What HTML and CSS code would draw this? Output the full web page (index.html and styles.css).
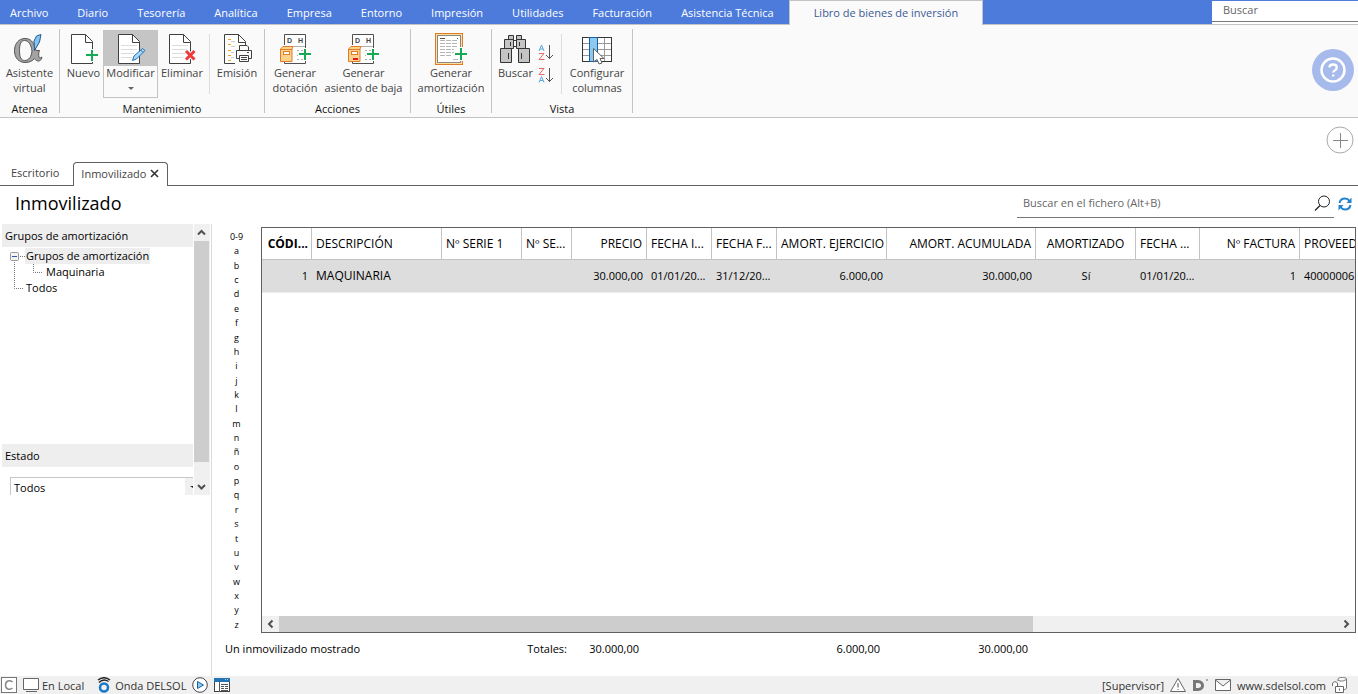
FILE: index.html
```html
<!DOCTYPE html>
<html lang="es">
<head>
<meta charset="utf-8">
<title>Inmovilizado</title>
<link rel="stylesheet" href="styles.css">
</head>
<body>
<svg class="defs" width="0" height="0" aria-hidden="true">
  <defs>
    <g id="sheet"><path d="M6.500 2.500H20.500L27.500 9.500V31.500H6.500Z" fill="#fff" stroke="#404040"/><path d="M20.500 2.500V10.500H27.500" fill="none" stroke="#404040"/></g>
    <g id="lines" stroke="#dcdcdc"><path d="M9 13.500H25M9 17.500H25M9 21.500H22M9 25.500H20"/></g>
    <g id="ledger">
      <path d="M8.500 13V2.500H29.500V31.500H8.500V28" fill="#fff" stroke="#505050"/>
      <path d="M9 14.500H29M21 18.500H23M25 18.500H27M21 23.500H23M21 27.500H23M25 27.500H27" stroke="#b0b0b0"/>
      <text x="11" y="11" font-size="7" class="glyph">D</text><text x="22" y="11" font-size="7" class="glyph">H</text>
      <path d="M4.500 17L7 14.500H17L16 17V29.500H4.500Z" fill="#fbd38b" stroke="#e07b28"/><path d="M4.500 17.500H16" stroke="#e07b28"/>
      <rect x="7.500" y="19.500" width="6" height="3" fill="#fff" stroke="#e07b28"/>
      <path d="M22 22H35M29 16V29" stroke="#fff" stroke-width="4"/>
      <path d="M23 22H35M29 17V28" stroke="#18a957" stroke-width="2"/>
    </g>
  </defs>
</svg>
<div class="app">
  <header class="menubar">
    <nav class="menu">
      <button>Archivo</button><button>Diario</button><button>Tesorería</button><button>Analítica</button><button>Empresa</button><button>Entorno</button><button>Impresión</button><button>Utilidades</button><button>Facturación</button><button>Asistencia Técnica</button>
    </nav>
    <button class="menu-active">Libro de bienes de inversión</button>
    <input class="top-search" type="search" placeholder="Buscar" aria-label="Buscar">
  </header>

  <section class="ribbon">
    <div class="group g-atenea">
      <div class="tools">
        <button class="tool w-atenea"><svg width="31" height="32" viewBox="0 0 31 32"><path fill-rule="evenodd" d="M11 5.500C16.500 5.500 19.500 9 21 14.500L22 17.500H25.500C24.500 20 24.500 22 25 24C25.500 26 26.500 25.500 27 24L28 24.500C27 28.500 23 29.500 20.500 25.500C18.500 28 15.500 29.500 11 29.500C4.500 29.500 .5 24.500 .5 17.500C.5 10.500 5 5.500 11 5.500ZM10.500 7.500C7 7.500 5.500 11 5.500 17.500C5.500 24 7 27.500 10.500 27.500C15 27.500 17.500 23.500 18 18C17 11 14.500 7.500 10.500 7.500Z" fill="#a3a3a3" stroke="#555"/><path d="M20.500 17.500L20 8L22.500 3L27 1.500L25.500 9Z" fill="#85c4ee" stroke="#235d91"/></svg><span>Asistente<br>virtual</span></button>
      </div>
      <h2>Atenea</h2>
    </div>
    <div class="group g-mant">
      <div class="tools">
        <button class="tool w-nuevo"><svg width="31" height="32" viewBox="3 1 31 32"><use href="#sheet"/><path d="M20 23H34M27 17V30" stroke="#fafafa" stroke-width="4"/><path d="M21 23H33M27 18V29" stroke="#18a957" stroke-width="2"/></svg><span>Nuevo</span></button>
        <button class="tool w-modificar selected"><svg width="31" height="32" viewBox="3 1 31 32"><use href="#sheet"/><use href="#lines"/><path d="M20.500 28.500L22 24L30.500 16.500L33 18.500L24.500 27Z" fill="#a8d8fa" stroke="#2374b5"/><path d="M28.500 18L31 20.500" stroke="#2374b5"/></svg><span>Modificar</span><i class="caret"></i></button>
        <button class="tool w-eliminar"><svg width="32" height="32" viewBox="3 1 32 32"><use href="#sheet"/><use href="#lines"/><path d="M22.500 18.500L32 28M32 18.500L22.500 28" stroke="#fafafa" stroke-width="5"/><path d="M23 19L31.500 27.500M31.500 19L23 27.500" stroke="#ee3a3a" stroke-width="3"/></svg><span>Eliminar</span></button>
        <span class="divider"></span>
        <button class="tool w-eliminar"><svg width="32" height="32" viewBox="3 1 32 32"><use href="#sheet"/><path d="M10 7.500H13M10 12.500H13M10 18.500H13M10 23.500H13M10 28.500H13" stroke="#f2a11f"/><path d="M13 9.500H17M13 14.500H19M13 20.500H16M13 25.500H16" stroke="#ccc"/><g transform="translate(-2 0)"><path d="M19 13H37V32H19Z" fill="#fafafa"/><path d="M23.500 18V13.500H31L32.500 15V18M23.500 26.500H20.500V18.500H35.500V26.500H32.500M23.500 23.500H32.500V29.500H23.500ZM25 25.500H31M25 27.500H31M31 20.500H33" fill="none" stroke="#404040"/></g></svg><span>Emisión</span></button>
      </div>
      <h2>Mantenimiento</h2>
    </div>
    <div class="group g-acc">
      <div class="tools">
        <button class="tool w-dot"><svg width="32" height="32" viewBox="3 1 32 32"><use href="#ledger"/></svg><span>Generar<br>dotación</span></button>
        <button class="tool w-baja"><svg width="31" height="32" viewBox="4 1 31 32"><use href="#ledger"/><path d="M9 27H14" stroke="#e0161f" stroke-width="2"/></svg><span>Generar<br>asiento de baja</span></button>
      </div>
      <h2>Acciones</h2>
    </div>
    <div class="group g-utiles">
      <div class="tools">
        <button class="tool w-utiles"><svg width="32" height="32" viewBox="0 0 32 32"><rect x=".5" y=".5" width="27" height="31" fill="#fbdf9b" stroke="#e07b28"/><rect x="2.500" y="2.500" width="23" height="27" fill="#fff" stroke="#888"/><path d="M5 5.500H10M22 5.500H23" stroke="#555"/><path d="M5 7.500H23M5 10.500H23M5 13.500H23M5 16.500H19M5 19.500H19M5 22.500H17M18 26.500H23" stroke="#b5b5b5" stroke-dasharray="5 1"/><path d="M19 21H33M26 14V28" stroke="#fff" stroke-width="4"/><path d="M20 21H32M26 15V27" stroke="#18a957" stroke-width="2"/></svg><span>Generar<br>amortización</span></button>
      </div>
      <h2>Útiles</h2>
    </div>
    <div class="group g-vista">
      <div class="tools">
        <button class="tool w-nuevo"><svg width="31" height="32" viewBox="0 -1 31 32"><g fill="#c4c4c4" stroke="#353535"><path d="M13 6.500H18V12.500H13Z" fill="#fafafa"/><path d="M8.500 1.500H13.500V5.500H8.500ZM16.500 1.500H21.500V5.500H16.500Z"/><path d="M4.500 5.500H13.500V14.500H4.500ZM16.500 5.500H25.500V14.500H16.500ZM.5 14.500H11.500V28.500H.5ZM18.500 14.500H29.500V28.500H18.500Z"/><path d="M10.500 8V12M19.500 8V12M8.500 19V25M21.500 19V25"/></g></svg><span>Buscar</span></button>
        <span class="sorts">
          <button aria-label="Orden ascendente"><svg width="16" height="18" viewBox="0 0 16 18"><path d="M1 7L3.500 1L6 7M2 5H5" fill="none" stroke="#5ba6d4"/><path d="M1 9.500H6L1 15.500H6.500" fill="none" stroke="#e76666"/><path d="M11.500 1V15M8 11L11.500 14.500L15 11" fill="none" stroke="#555"/></svg></button>
          <button aria-label="Orden descendente"><svg width="16" height="18" viewBox="0 0 16 18"><path d="M1 15.500L3.500 9.500L6 15.500M2 13.500H5" fill="none" stroke="#5ba6d4"/><path d="M1 1.500H6L1 7.500H6.500" fill="none" stroke="#e76666"/><path d="M11.500 1V15M8 11L11.500 14.500L15 11" fill="none" stroke="#555"/></svg></button>
        </span>
        <span class="divider"></span>
        <button class="tool w-config"><svg width="32" height="32" viewBox="0 -1 32 32"><rect x="1.500" y="3.500" width="29" height="24" fill="#fff" stroke="#353535"/><path d="M2 9.500H30M2 15.500H30M2 21.500H30M23.500 4V27" stroke="#999"/><rect x="8.500" y="3.500" width="8" height="24" fill="#8cc8f0" stroke="#1763a6"/><path d="M12.500 14.500L23 24.500H19L21 29L18 30L16 25.500L12.500 28Z" fill="#fff" stroke="#606060"/></svg><span>Configurar<br>columnas</span></button>
      </div>
      <h2>Vista</h2>
    </div>
    <button class="help" aria-label="Ayuda"><svg width="42" height="42" viewBox="0 0 42 42"><circle cx="21" cy="21" r="21" fill="#a6baeb"/><circle cx="21" cy="21" r="11.500" fill="none" stroke="#fff" stroke-width="2.500"/><path d="M17.500 18.500C17.500 16.500 19 15.500 21 15.500C23 15.500 24.800 16.700 24.800 18.700C24.800 21.500 21.200 21.200 21.200 23.500M21.200 25.500V27.500" fill="none" stroke="#fff" stroke-width="2.300"/></svg></button>
  </section>

  <section class="docs">
    <button class="add" aria-label="Añadir"><svg width="28" height="28" viewBox="0 0 28 28"><circle cx="14" cy="14" r="13" fill="#fff" stroke="#aaa"/><path d="M7 14.500H22M14.500 7V22" stroke="#888"/></svg></button>
    <div class="tabs">
      <button class="tab">Escritorio</button>
      <button class="tab current">Inmovilizado <svg width="9" height="9" viewBox="0 0 9 9"><path d="M1 1L8 8M8 1L1 8" stroke="#333" stroke-width="1.600"/></svg></button>
    </div>
  </section>

  <section class="titlebar">
    <h1>Inmovilizado</h1>
    <div class="filesearch"><input type="text" placeholder="Buscar en el fichero (Alt+B)" aria-label="Buscar en el fichero"><svg width="17" height="17" viewBox="0 0 17 17"><circle cx="10" cy="6.500" r="5.500" fill="none" stroke="#222"/><path d="M6 10.500L1 15.500" stroke="#222" stroke-width="1.300"/></svg></div>
    <button class="refresh" aria-label="Actualizar"><svg width="14" height="14" viewBox="0 0 14 14"><path d="M1.500 6C2 3.500 4 1.500 7 1.500C9 1.500 10.500 2.500 11.500 4M12.500 8C12 10.500 10 12.500 7 12.500C5 12.500 3.500 11.500 2.500 10" fill="none" stroke="#2384cc" stroke-width="2"/><path d="M13.500 .5V6H8.500ZM.5 13.500V8H5.500Z" fill="#2384cc"/></svg></button>
  </section>

  <main class="body">
    <aside class="sidebar">
      <div class="panes">
        <div class="panel">
          <h3>Grupos de amortización</h3>
          <ul class="tree">
            <li><svg width="23" height="16" viewBox="0 0 23 16"><rect x="8.500" y="4.500" width="8" height="8" rx="1" fill="#f4f4f4" stroke="#999"/><path d="M10 8.500H15" stroke="#3654a5"/><path d="M18 8.500H23M12.500 14V16" stroke="#777" stroke-dasharray="1 1"/></svg><b>Grupos de amortización</b></li>
            <li><svg width="43" height="16" viewBox="0 0 43 16"><path d="M12.500 0V16M31.500 0V8.500H41" fill="none" stroke="#777" stroke-dasharray="1 1"/></svg><span>Maquinaria</span></li>
            <li><svg width="23" height="16" viewBox="0 0 23 16"><path d="M12.500 0V8.500H22" fill="none" stroke="#777" stroke-dasharray="1 1"/></svg><span>Todos</span></li>
          </ul>
        </div>
        <div class="panel state">
          <h3><label for="estado">Estado</label></h3>
          <div class="selectbox"><select id="estado"><option>Todos</option></select><svg width="8" height="17" viewBox="0 0 8 17"><path d="M5 8H8V10Z" fill="#222"/></svg></div>
        </div>
      </div>
      <div class="vscroll"><svg width="16" height="17" viewBox="0 0 16 17"><path d="M4 10.500L7.500 7L11 10.500" fill="none" stroke="#505050" stroke-width="2"/></svg><i></i><svg width="16" height="17" viewBox="0 0 16 17"><path d="M4 7L7.500 10.500L11 7" fill="none" stroke="#505050" stroke-width="2"/></svg></div>
    </aside>
    <section class="content">
      <div class="listing">
        <nav class="letters"><a href="#">0-9</a><a href="#">a</a><a href="#">b</a><a href="#">c</a><a href="#">d</a><a href="#">e</a><a href="#">f</a><a href="#">g</a><a href="#">h</a><a href="#">i</a><a href="#">j</a><a href="#">k</a><a href="#">l</a><a href="#">m</a><a href="#">n</a><a href="#">ñ</a><a href="#">o</a><a href="#">p</a><a href="#">q</a><a href="#">r</a><a href="#">s</a><a href="#">t</a><a href="#">u</a><a href="#">v</a><a href="#">w</a><a href="#">x</a><a href="#">y</a><a href="#">z</a></nav>
        <div class="gridbox">
          <div class="tablewrap">
            <table>
              <colgroup><col class="c50"><col class="c130"><col class="c80"><col class="c50"><col class="c75"><col class="c65"><col class="c65"><col class="c110"><col class="c149"><col class="c100"><col class="c64"><col class="c100"><col></colgroup>
              <thead><tr><th class="r key">CÓDI...</th><th>DESCRIPCIÓN</th><th>Nº SERIE 1</th><th>Nº SE...</th><th class="r">PRECIO</th><th>FECHA I...</th><th>FECHA F...</th><th class="r">AMORT. EJERCICIO</th><th class="r">AMORT. ACUMULADA</th><th class="c">AMORTIZADO</th><th>FECHA ...</th><th class="r">Nº FACTURA</th><th>PROVEED</th></tr></thead>
              <tbody><tr><td class="r">1</td><td class="name">MAQUINARIA</td><td></td><td></td><td class="r">30.000,00</td><td>01/01/20...</td><td>31/12/20...</td><td class="r">6.000,00</td><td class="r">30.000,00</td><td class="c">Sí</td><td>01/01/20...</td><td class="r">1</td><td>40000006</td></tr></tbody>
            </table>
          </div>
          <div class="hscroll"><svg width="17" height="16" viewBox="0 0 17 16"><path d="M10.500 4.500L7 8L10.500 11.500" fill="none" stroke="#505050" stroke-width="2"/></svg><i></i><svg width="17" height="16" viewBox="0 0 17 16"><path d="M6.500 4.500L10 8L6.500 11.500" fill="none" stroke="#505050" stroke-width="2"/></svg></div>
        </div>
      </div>
      <footer class="totals"><span>Un inmovilizado mostrado</span><span>Totales:</span><span>30.000,00</span><span>6.000,00</span><span>30.000,00</span></footer>
    </section>
  </main>

  <footer class="status">
    <svg width="16" height="16" viewBox="0 0 16 16"><rect x=".5" y=".5" width="15" height="15" fill="#fff" stroke="#777"/><path d="M11.500 5C8.500 2.500 4.500 4 4.500 8C4.500 12 8.500 13.500 11.500 11" fill="none" stroke="#888" stroke-width="1.500"/></svg>
    <span class="item"><svg width="16" height="16" viewBox="0 0 16 16"><path d="M.5 1.500H15.500V12.500H.5ZM3 14.500H14" fill="#fff" stroke="#666"/></svg>En Local</span>
    <span class="item onda"><svg width="15" height="16" viewBox="0 0 15 16"><circle cx="7" cy="10.500" r="4" fill="none" stroke="#1978c8" stroke-width="2.500"/><path d="M1 3C5 0 9 0 13 3M2 5.500C5 2.500 8.500 2.500 11.500 4.500" fill="none" stroke="#222" stroke-width="1.500"/></svg>Onda DELSOL</span>
    <svg width="16" height="16" viewBox="0 0 16 16"><circle cx="8" cy="8" r="7.300" fill="#fff" stroke="#444"/><path d="M5.500 4.500L11.500 8L5.500 11.500Z" fill="#8cc8f0" stroke="#1763a6"/></svg>
    <svg width="16" height="16" viewBox="0 0 16 16"><rect x=".5" y="1.500" width="15" height="13" fill="#fff" stroke="#444"/><path d="M0 1H16V5H0Z" fill="#2374b5"/><path d="M11 2.500H15" stroke="#9fd0f3" stroke-dasharray="1 1"/><path d="M5.500 5V15M7 7.500H14M7 9.500H10M11 9.500H14M7 11.500H10M11 11.500H14M7 13.500H14" stroke="#555"/></svg>
    <span class="user">[Supervisor]</span>
    <svg width="16" height="16" viewBox="0 0 16 16"><path d="M8 1.500L15.500 14.500H.5Z" fill="#fff" stroke="#666"/><path d="M8 6V10.500M8 12V13" stroke="#555"/></svg>
    <svg width="17" height="16" viewBox="0 0 17 16"><path d="M2.500 4.500H6C12 4.500 12 12.500 6 12.500H2.500Z" fill="none" stroke="#777" stroke-width="3"/><path d="M14 2H16V4H14Z" fill="#aaa"/></svg>
    <svg width="16" height="16" viewBox="0 0 16 16"><path d="M.5 2.500H15.500V13.500H.5ZM.5 3L8 9L15.500 3" fill="#fff" stroke="#666"/></svg>
    <a href="#">www.sdelsol.com</a>
    <svg width="16" height="16" viewBox="0 0 16 16"><path d="M6 4V2C6 0 14.500 0 14.500 2V11C14.500 12 13 12.500 12 12.500M6 3C8 5 13 4 14.500 2" fill="#fff" stroke="#777"/><path d="M.5 9V7C.5 4 5.500 4 5.500 7V9M3.500 9.500H11.500V15.500H3.500ZM7.500 11.500V13.500" fill="#fff" stroke="#666"/></svg>
  </footer>
</div>
</body>
</html>
```
FILE: styles.css
```css
* { box-sizing: border-box; }
body { margin: 0; background: #fff; color: #000; font: 11px/15px "Open Sans", "Noto Sans", sans-serif; }
button { font: inherit; color: inherit; background: none; border: 0; padding: 0; margin: 0; white-space: nowrap; }
input, select { font: inherit; color: inherit; }
h1, h2, h3, ul { margin: 0; padding: 0; font-weight: 400; list-style: none; }
a { color: inherit; text-decoration: none; }
svg { display: block; flex: none; }
input::placeholder { color: #666; opacity: 1; }
.defs { position: absolute; }
.glyph { font-family: "Liberation Sans", sans-serif; font-weight: 700; fill: #444; }
.app { display: flex; flex-direction: column; height: 100vh; overflow: hidden; }

.menubar { display: flex; height: 25px; flex: none; background: #4d7bdb; border-bottom: 1px solid #c3c3c3; }
.menu { display: flex; gap: 29px; padding: 0 15px 0 10px; color: #fff; }
.menu-active { height: 25px; padding: 0 24px 2px; color: #3c5a96; background: #fafafa; border: 1px solid #c3c3c3; border-bottom: 0; }
.top-search { width: 146px; height: 21px; margin: 1px 0 0 auto; padding: 0 11px 3px; border: 0; border-bottom: 1px solid #777; border-radius: 0; outline: 0; background: #fff; box-shadow: 0 2px #fff; }

.ribbon { display: flex; flex: none; height: 93px; padding: 4px 0; background: #fafafa; border-bottom: 1px solid #c3c3c3; color: #444; }
.group { display: flex; flex-direction: column; justify-content: space-between; align-items: center; flex: none; border-right: 1px solid #c3c3c3; }
.group h2 { margin-bottom: -3px; font-size: 11px; color: #111; line-height: 15px; }
.g-atenea { width: 60px; }
.g-mant { width: 205px; }
.g-acc { width: 146px; }
.g-utiles { width: 81px; }
.g-vista { width: 141px; }
.tools { display: flex; align-self: stretch; height: 69px; padding-top: 1px; }
.g-mant .tools, .g-vista .tools { padding-left: 4px; }
.g-acc .tools { padding-left: 5px; }
.tool { display: flex; flex-direction: column; align-items: center; padding-top: 3px; height: 68px; }
.w-atenea { width: 59px; }
.w-nuevo { width: 39px; }
.w-modificar { width: 55px; }
.w-eliminar { width: 48px; }
.w-dot { width: 50px; }
.w-baja { width: 87px; }
.w-utiles { width: 80px; }
.w-config { width: 64px; }
.selected { border: 1px solid #c3c3c3; border-top: 0; background: linear-gradient(#c5c5c5 36px, #fafafa 36px); }
.caret { margin-top: 7px; border: 3px solid transparent; border-top-color: #666; }
.divider { width: 1px; height: 60px; margin: 4px 3px 0; background: #dcdcdc; }
.sorts { display: flex; flex-direction: column; gap: 5px; padding: 14px 4px 0 3px; }
.help { margin: 0 4px 2px auto; }

.docs { display: flex; flex-direction: column; flex: none; align-items: flex-end; justify-content: space-between; height: 68px; padding-top: 8px; }
.add { margin-right: 4px; }
.tabs { display: flex; align-self: stretch; height: 24px; box-shadow: inset 0 -1px #606060; color: #444; }
.tab { padding: 0 14px 3px 11px; }
.current { display: flex; align-items: center; gap: 4px; padding: 0 8px 3px 7px; color: #444; background: #fff; border: 1px solid #606060; border-bottom: 0; border-radius: 4px 4px 0 0; }

.titlebar { display: flex; flex: none; height: 38px; padding-right: 6px; }
h1 { flex: 1; padding-left: 15px; font-size: 18px; line-height: 35px; }
.filesearch { display: flex; align-items: center; width: 317px; height: 28px; margin-top: 4px; padding: 0 3px 0 6px; border-bottom: 1px solid #777; }
.filesearch input { flex: 1; min-width: 0; padding: 0 0 2px; border: 0; outline: 0; background: none; }
.refresh { align-self: flex-start; margin: 11px 0 0 4px; }

.body { display: flex; flex: 1; min-height: 0; }
.sidebar { display: flex; align-items: flex-start; justify-content: space-between; flex: none; width: 212px; padding: 0 1px 0 2px; border-right: 1px solid #dcdcdc; }
.panes { display: flex; flex-direction: column; width: 191px; height: 271px; overflow: hidden; }
.panel h3 { padding: 0 3px; font-size: 11px; line-height: 23px; background: #eee; }
.state { margin-top: auto; }
.tree { padding-top: 1px; }
.tree li { display: flex; height: 16px; line-height: 16px; }
.tree b { padding: 0 1px; font-weight: 400; background: #eee; }
.tree span { padding: 0 1px; }
.selectbox { display: flex; height: 18px; margin: 10px 0 0 8px; border: solid #c8c8c8; border-width: 1px 0 0 1px; }
.selectbox select { flex: 1; appearance: none; padding: 1px 3px; border: 0; border-radius: 0; background: #fff; line-height: 15px; height: 18px; }
.selectbox svg { background: #f0f0f0; }
.vscroll { display: flex; flex-direction: column; width: 16px; height: 271px; background: #f0f0f0; }
.vscroll i { flex: none; height: 221px; margin: 0 1px 0 0; background: #cdcdcd; }
.vscroll svg:last-child { margin-top: auto; }

.content { display: flex; flex-direction: column; flex: 1; min-width: 0; padding: 3px 2px 0 0; }
.listing { display: flex; flex: 1; min-height: 0; }
.letters { display: flex; flex-direction: column; justify-content: space-between; width: 49px; padding: 4px 0 2px; font-size: 9px; line-height: 12px; text-align: center; }
.gridbox { display: flex; flex-direction: column; flex: 1; min-width: 0; border: 1px solid #606060; }
.tablewrap { flex: 1; overflow: hidden; }
table { table-layout: fixed; width: 100%; border-collapse: separate; border-spacing: 0; font-size: 12px; }
th, td { height: 32px; padding: 0 4px; text-align: left; font-weight: 400; white-space: nowrap; }
th { border-right: 1px solid #c3c3c3; border-bottom: 1px solid #c3c3c3; }
th:last-child { padding-right: 0; border-right: 0; }
td { padding-bottom: 1px; font-size: 11px; background: #ddd; box-shadow: 0 1px #eee; }
.name { font-size: 12px; }
.key { padding-right: 3px; font-weight: 700; }
.r { text-align: right; }
.c { text-align: center; }
.c50 { width: 50px; } .c64 { width: 64px; } .c65 { width: 65px; } .c75 { width: 75px; } .c80 { width: 80px; }
.c100 { width: 100px; } .c110 { width: 110px; } .c130 { width: 130px; } .c149 { width: 149px; }
.hscroll { display: flex; flex: none; height: 16px; background: #f0f0f0; }
.hscroll i { width: 69%; background: #cdcdcd; }
.hscroll svg:last-child { margin-left: auto; }
.totals { display: grid; grid-template-columns: 270px 72px 72px 241px 148px; flex: none; height: 43px; padding: 8px 0 0 13px; text-align: right; }
.totals span:first-child { text-align: left; }

.status { display: flex; align-items: center; gap: 6px; flex: none; height: 18px; padding: 0 10px 0 1px; background: #f0f0f0; color: #333; }
.item { display: flex; align-items: center; gap: 3px; }
.onda { margin-left: 7px; }
.user { margin-left: auto; }
```
